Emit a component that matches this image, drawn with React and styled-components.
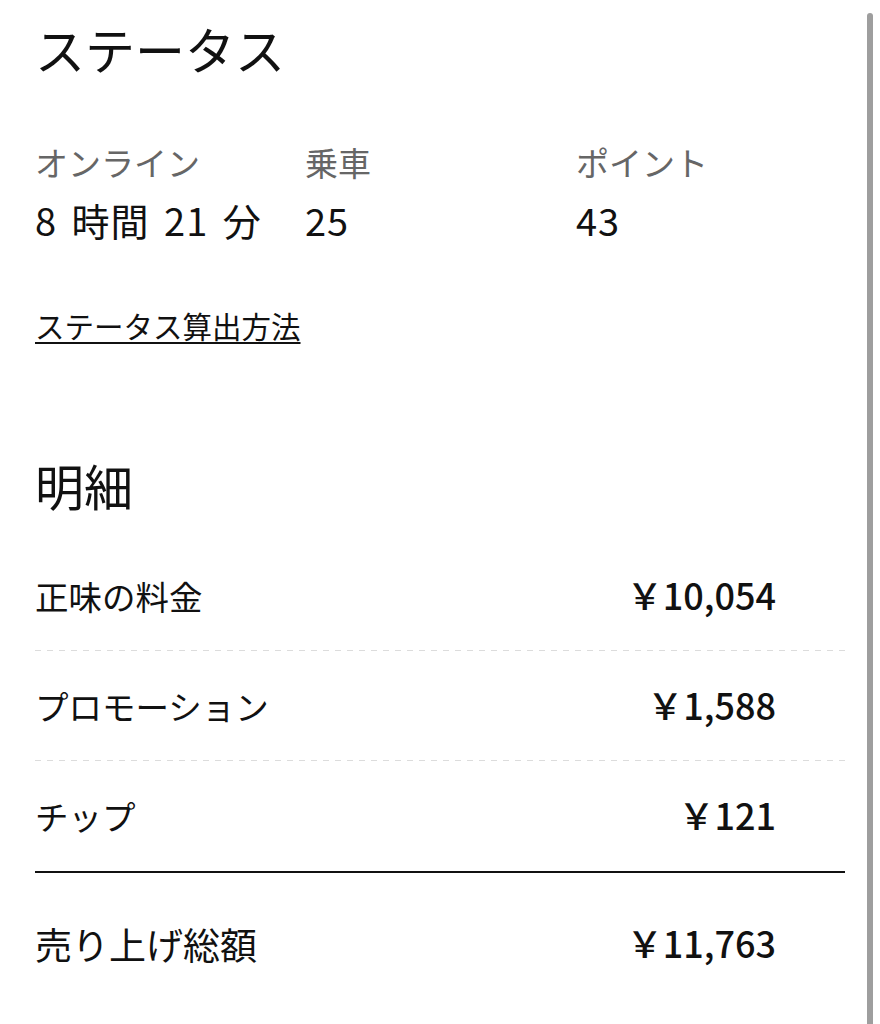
import React from "react";
import styled, { createGlobalStyle } from "styled-components";

const GlobalStyle = createGlobalStyle`
  html, body {
    margin: 0;
    padding: 0;
    background: #fff;
  }
  body {
    font-family: "Noto Sans CJK JP", "Noto Sans", sans-serif;
    color: #111;
  }
`;

const Page = styled.div`
  position: relative;
  width: 880px;
  min-height: 1024px;
  box-sizing: border-box;
  padding: 18px 35px 0 35px;
  overflow: hidden;
`;

const Content = styled.div`
  width: 810px;
`;

const ScrollThumb = styled.div`
  position: absolute;
  top: 13px;
  right: 7px;
  width: 6px;
  height: 1040px;
  border-radius: 3px;
  background: #9e9e9e;
`;

const Title = styled.h1`
  margin: 0;
  font-size: ${(p) => p.size || 50}px;
  line-height: ${(p) => p.lh || 60}px;
  font-weight: 400;
  color: #111;
  margin-top: ${(p) => p.top || 0}px;
`;

const StatsGrid = styled.div`
  display: grid;
  grid-template-columns: 270px 271px 1fr;
  margin-top: 64px;
`;

const Stat = styled.div`
  display: flex;
  flex-direction: column;
  gap: 16px;
`;

const StatLabel = styled.div`
  font-size: 33px;
  line-height: 40px;
  color: #666;
`;

const StatValue = styled.div`
  font-size: 38px;
  line-height: 44px;
  letter-spacing: 1px;
  word-spacing: 5px;
  color: #111;
`;

const HelpLink = styled.a`
  display: inline-block;
  margin-top: 63px;
  font-size: 29.5px;
  line-height: 40px;
  color: #111;
  text-decoration: underline;
  text-underline-offset: 4px;
  text-decoration-thickness: 2px;
`;

const List = styled.div`
  margin-top: 28px;
  display: flex;
  flex-direction: column;
`;

const Row = styled.div`
  display: flex;
  align-items: center;
  justify-content: space-between;
  height: ${(p) => (p.total ? 142 : 109)}px;
  padding-right: 69px;
`;

const RowLabel = styled.div`
  font-size: ${(p) => (p.total ? 37 : 33.5)}px;
  color: #111;
`;

const Amount = styled.div`
  font-size: 36px;
  font-weight: 500;
  color: #111;
  margin-top: -4px;
`;

const Dashed = styled.div`
  height: 1px;
  background-image: repeating-linear-gradient(
    to right,
    #dcdcdc 0 6px,
    transparent 6px 12px
  );
`;

const Solid = styled.div`
  height: 2px;
  background: #111;
  margin-top: 1px;
`;

const stats = [
  { label: "オンライン", value: "8 時間 21 分" },
  { label: "乗車", value: "25" },
  { label: "ポイント", value: "43" },
];

const items = [
  { label: "正味の料金", amount: "￥10,054" },
  { label: "プロモーション", amount: "￥1,588" },
  { label: "チップ", amount: "￥121" },
];

export default function App() {
  return (
    <>
      <GlobalStyle />
      <Page>
        <Content>
          <Title>ステータス</Title>
          <StatsGrid>
            {stats.map((s) => (
              <Stat key={s.label}>
                <StatLabel>{s.label}</StatLabel>
                <StatValue>{s.value}</StatValue>
              </Stat>
            ))}
          </StatsGrid>
          <HelpLink href="#">ステータス算出方法</HelpLink>
          <Title size={49} lh={56} top={112}>
            明細
          </Title>
          <List>
            {items.map((it, i) => (
              <React.Fragment key={it.label}>
                <Row>
                  <RowLabel>{it.label}</RowLabel>
                  <Amount>{it.amount}</Amount>
                </Row>
                {i < items.length - 1 ? <Dashed /> : <Solid />}
              </React.Fragment>
            ))}
            <Row total>
              <RowLabel total>売り上げ総額</RowLabel>
              <Amount>￥11,763</Amount>
            </Row>
          </List>
        </Content>
        <ScrollThumb />
      </Page>
    </>
  );
}
